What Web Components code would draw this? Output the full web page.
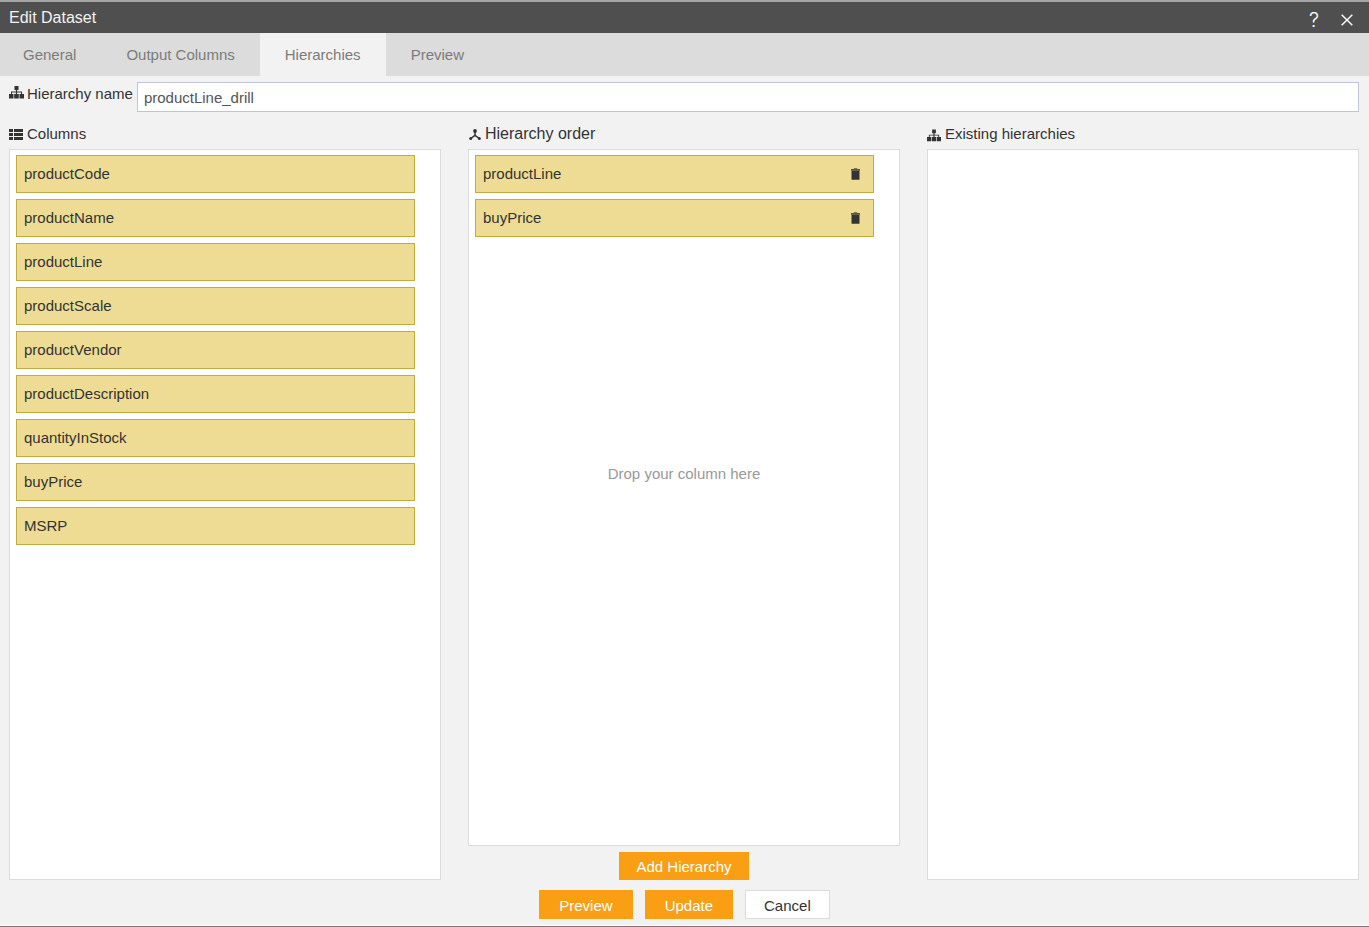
<!DOCTYPE html>
<html lang="en">
<head>
<meta charset="utf-8">
<title>Edit Dataset</title>
<style>
  html, body { margin: 0; }
  body { font-family: "Liberation Sans", Arial, sans-serif; font-size: 15px; line-height: 20px; color: #333; background: #f2f2f2; }
</style>
</head>
<body>
<dataset-dialog heading="Edit Dataset">
  <dialog-tabs slot="tabs" labels="General|Output Columns|Hierarchies|Preview" selected="2"></dialog-tabs>
  <hierarchy-name value="productLine_drill"></hierarchy-name>
  <panel-row>
    <list-panel heading="Columns" icon="list">
      <column-item>productCode</column-item>
      <column-item>productName</column-item>
      <column-item>productLine</column-item>
      <column-item>productScale</column-item>
      <column-item>productVendor</column-item>
      <column-item>productDescription</column-item>
      <column-item>quantityInStock</column-item>
      <column-item>buyPrice</column-item>
      <column-item>MSRP</column-item>
    </list-panel>
    <list-panel heading="Hierarchy order" icon="fork" large placeholder="Drop your column here">
      <column-item removable>productLine</column-item>
      <column-item removable>buyPrice</column-item>
      <action-button slot="action" compact>Add Hierarchy</action-button>
    </list-panel>
    <list-panel heading="Existing hierarchies" icon="tree"></list-panel>
  </panel-row>
  <action-button slot="footer">Preview</action-button>
  <action-button slot="footer">Update</action-button>
  <action-button slot="footer" plain>Cancel</action-button>
</dataset-dialog>

<script>
const icons = {
  tree: `<svg width="15" height="13" viewBox="0 0 15 13" fill="currentColor" aria-hidden="true"><path d="M5.500 0h4v4h-1.400v1.600h4.900v2.400h2v4.600h-4.500V8h1.500V6.600H8.100V8h1.700v4.600H5.200V8h1.700V6.600H3V8h1.500v4.600H0V8h2V5.600h4.900V4H5.500z"/></svg>`,
  list: `<svg width="14" height="12" viewBox="0 0 14 12" fill="currentColor" aria-hidden="true"><path d="M0 0h4v3H0zM5 0h9v3H5zM0 4h4v3H0zM5 4h9v3H5zM0 8h4v3H0zM5 8h9v3H5z"/></svg>`,
  fork: `<svg width="12" height="12" viewBox="0 0 12 12" fill="currentColor" aria-hidden="true"><circle cx="6" cy="2" r="1.900"/><circle cx="1.700" cy="9.500" r="1.500"/><circle cx="10.300" cy="9.500" r="1.500"/><path d="M6 2v4.700M6 6.300L1.700 9.500M6 6.300l4.300 3.200" fill="none" stroke="currentColor" stroke-width="1.500"/></svg>`,
  trash: `<svg width="9" height="12" viewBox="0 0 9 12" aria-hidden="true"><path d="M0 1h2.500l.6-.7h2.800l.6.700H9v1.700H0z" fill="#5b553f"/><path d="M.5 2.700h8v8.500a.6.600 0 0 1-.6.600H1.100a.6.600 0 0 1-.6-.6z" fill="#333"/></svg>`,
  close: `<svg width="12" height="12" viewBox="0 0 12 12" aria-hidden="true"><path d="M.7.700l10.600 10.600M11.300.700L.7 11.300" stroke="#fff" stroke-width="1.400" fill="none"/></svg>`
};

class BaseElement extends HTMLElement {
  connectedCallback() {
    if (this.shadowRoot) return;
    this.attachShadow({ mode: 'open' }).innerHTML = this.render();
  }
}

customElements.define('dataset-dialog', class extends BaseElement {
  render() {
    return `<style>
      :host { display: flex; flex-direction: column; min-height: 100vh; box-sizing: border-box; border-top: 2px solid #a5a5a5; border-bottom: 1px solid #777; }
      header { display: flex; align-items: center; justify-content: space-between; height: 31px; padding: 0 16px 0 9px; background: #4f4f4f; color: #fff; }
      h1 { margin: 0; font-size: 16px; font-weight: 400; color: #f2f2f2; }
      .tools { display: flex; align-items: center; gap: 22px; padding-top: 4px; }
      button { display: flex; border: 0; padding: 0; background: none; color: #fff; cursor: pointer; }
      .help { font: 300 20px/20px Inter, sans-serif; }
      main { flex: 1; display: flex; flex-direction: column; padding: 6px 10px 10px 9px; }
      footer { display: flex; justify-content: center; gap: 12px; padding-bottom: 6px; border-bottom: 1px solid #fff; }
    </style>
    <header><h1>${this.getAttribute('heading')}</h1>
      <div class="tools"><button class="help" type="button" aria-label="Help">?</button><button type="button" aria-label="Close">${icons.close}</button></div>
    </header>
    <slot name="tabs"></slot>
    <main><slot></slot></main>
    <footer><slot name="footer"></slot></footer>`;
  }
});

customElements.define('dialog-tabs', class extends BaseElement {
  render() {
    const selected = Number(this.getAttribute('selected'));
    const tabs = this.getAttribute('labels').split('|').map((label, i) =>
      `<button type="button" role="tab" aria-selected="${i === selected}">${label}</button>`).join('');
    return `<style>
      :host { display: block; background: #dcdcdc; }
      nav { display: flex; height: 43px; }
      button { border: 0; margin: 0; padding: 0 25px; font: inherit; color: #7b7b7b; background: none; cursor: pointer; }
      button:first-child { padding-left: 23px; }
      button[aria-selected="true"] { background: #f2f2f2; }
    </style><nav role="tablist">${tabs}</nav>`;
  }
});

customElements.define('hierarchy-name', class extends BaseElement {
  render() {
    return `<style>
      :host { display: flex; gap: 4px; }
      label { display: flex; gap: 3px; padding-top: 2px; white-space: nowrap; }
      svg { margin-top: 2px; }
      input { flex: 1; min-width: 0; height: 30px; box-sizing: border-box; border: 1px solid #bcc6d6; padding: 0 6px; font: inherit; color: #555; background: #fff; border-radius: 0; outline: 0; }
    </style>
    <label for="name">${icons.tree}<span>Hierarchy name</span></label>
    <input id="name" type="text" value="${this.getAttribute('value')}">`;
  }
});

customElements.define('panel-row', class extends BaseElement {
  render() {
    return `<style>
      :host { flex: 1; display: grid; grid-template-columns: repeat(3, minmax(0, 1fr)); gap: 27px; padding-top: 12px; }
    </style><slot></slot>`;
  }
});

customElements.define('list-panel', class extends BaseElement {
  render() {
    const hint = this.getAttribute('placeholder');
    return `<style>
      :host { display: flex; flex-direction: column; }
      h2 { display: flex; align-items: center; gap: 4px; margin: 0 0 5px; font-size: 15px; font-weight: 400; line-height: 20px; }
      :host([large]) h2 { font-size: 16px; padding-left: 1px; }
      svg { margin-top: 2px; max-width: 14px; }
      .box { position: relative; flex: 1; display: flex; flex-direction: column; gap: 6px; padding: 5px 25px 5px 6px; border: 1px solid #dcdcdc; background: #fff; }
      .hint { position: absolute; inset: 0; display: grid; place-items: center; margin: 0; padding-bottom: 48px; color: #999; pointer-events: none; }
      ::slotted([slot="action"]) { align-self: center; margin-top: 6px; }
    </style>
    <h2>${icons[this.getAttribute('icon')]}<span>${this.getAttribute('heading')}</span></h2>
    <div class="box"><slot></slot>${hint ? `<p class="hint">${hint}</p>` : ''}</div>
    <slot name="action"></slot>`;
  }
});

customElements.define('column-item', class extends BaseElement {
  render() {
    return `<style>
      :host { display: flex; align-items: center; justify-content: space-between; height: 38px; box-sizing: border-box; padding: 0 13px 0 7px; border: 1px solid #c3ab3f; background: #eedc94; cursor: move; }
      button { display: flex; border: 0; padding: 0; background: none; cursor: pointer; }
    </style><span><slot></slot></span>${this.hasAttribute('removable') ? `<button type="button" aria-label="Remove">${icons.trash}</button>` : ''}`;
  }
});

customElements.define('action-button', class extends BaseElement {
  render() {
    return `<style>
      :host { display: block; }
      button { display: block; height: 29px; border: 1px solid #fa9f14; border-radius: 0; padding: 2px 19px 0; font: inherit; color: #fff; background: #fa9f14; cursor: pointer; }
      :host([compact]) button { height: 28px; padding: 2px 16px 0; }
      :host([plain]) button { color: #333; background: #fff; border-color: #dcdcdc; padding: 2px 18px 0; }
    </style><button type="button"><slot></slot></button>`;
  }
});
</script>
</body>
</html>
